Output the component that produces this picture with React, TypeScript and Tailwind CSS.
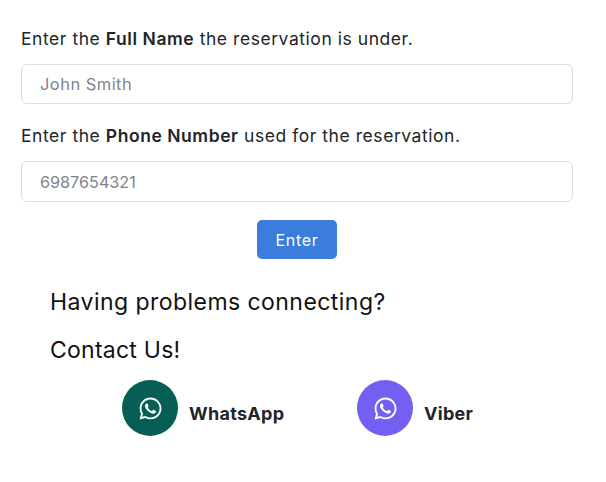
import { FaWhatsapp } from "react-icons/fa"

function ContactLink({ label, color }: { label: string; color: string }) {
    return (
        <a href="#" className="flex items-center gap-[11px]">
            <span className={`flex h-14 w-14 items-center justify-center rounded-full text-white ${color}`}>
                <FaWhatsapp className="h-[25px] w-[25px]" />
            </span>
            <span className="pt-[10px] text-[18px] font-bold tracking-[0.3px] text-[#212529]">{label}</span>
        </a>
    )
}

export default function App() {
    return (
        <div className="h-[482px] w-[606px] bg-white pl-[21px] pr-[33px] pt-[27px] font-['Inter',sans-serif] text-[#212529]">
            <p className="h-[24px] text-[17.5px] leading-[24px] tracking-[0.55px]">
                Enter the <b className="font-semibold">Full Name</b> the reservation is under.
            </p>
            <input
                placeholder="John Smith"
                className="mt-[13px] block h-[40px] w-full rounded-md border border-[#d9dde1] px-[18px] text-[16.5px] tracking-[0.45px] outline-none placeholder:text-[#7d858c]"
            />
            <p className="mt-[20px] h-[24px] text-[17.5px] leading-[24px] tracking-[0.55px]">
                Enter the <b className="font-semibold">Phone Number</b> used for the reservation.
            </p>
            <input
                placeholder="6987654321"
                className="mt-[13px] block h-[41px] w-full rounded-md border border-[#d9dde1] px-[18px] text-[16.2px] outline-none placeholder:text-[#7d858c]"
            />
            <div className="mt-[18px] flex justify-center">
                <button className="h-[39px] w-[80px] rounded-[5px] bg-[#3b7ddd] text-[16px] tracking-[0.7px] text-white">Enter</button>
            </div>
            <div className="pl-[29px] pt-[27px] text-[23px] leading-[33px] tracking-[0.45px] text-[#111]">
                <p>Having problems connecting?</p>
                <p className="mt-[15px] tracking-[0.25px]">Contact Us!</p>
            </div>
            <div className="mt-[13px] flex pl-[101px]">
                <div className="w-[235px]">
                    <ContactLink label="WhatsApp" color="bg-[#075e54]" />
                </div>
                <ContactLink label="Viber" color="bg-[#7360f2]" />
            </div>
        </div>
    )
}
